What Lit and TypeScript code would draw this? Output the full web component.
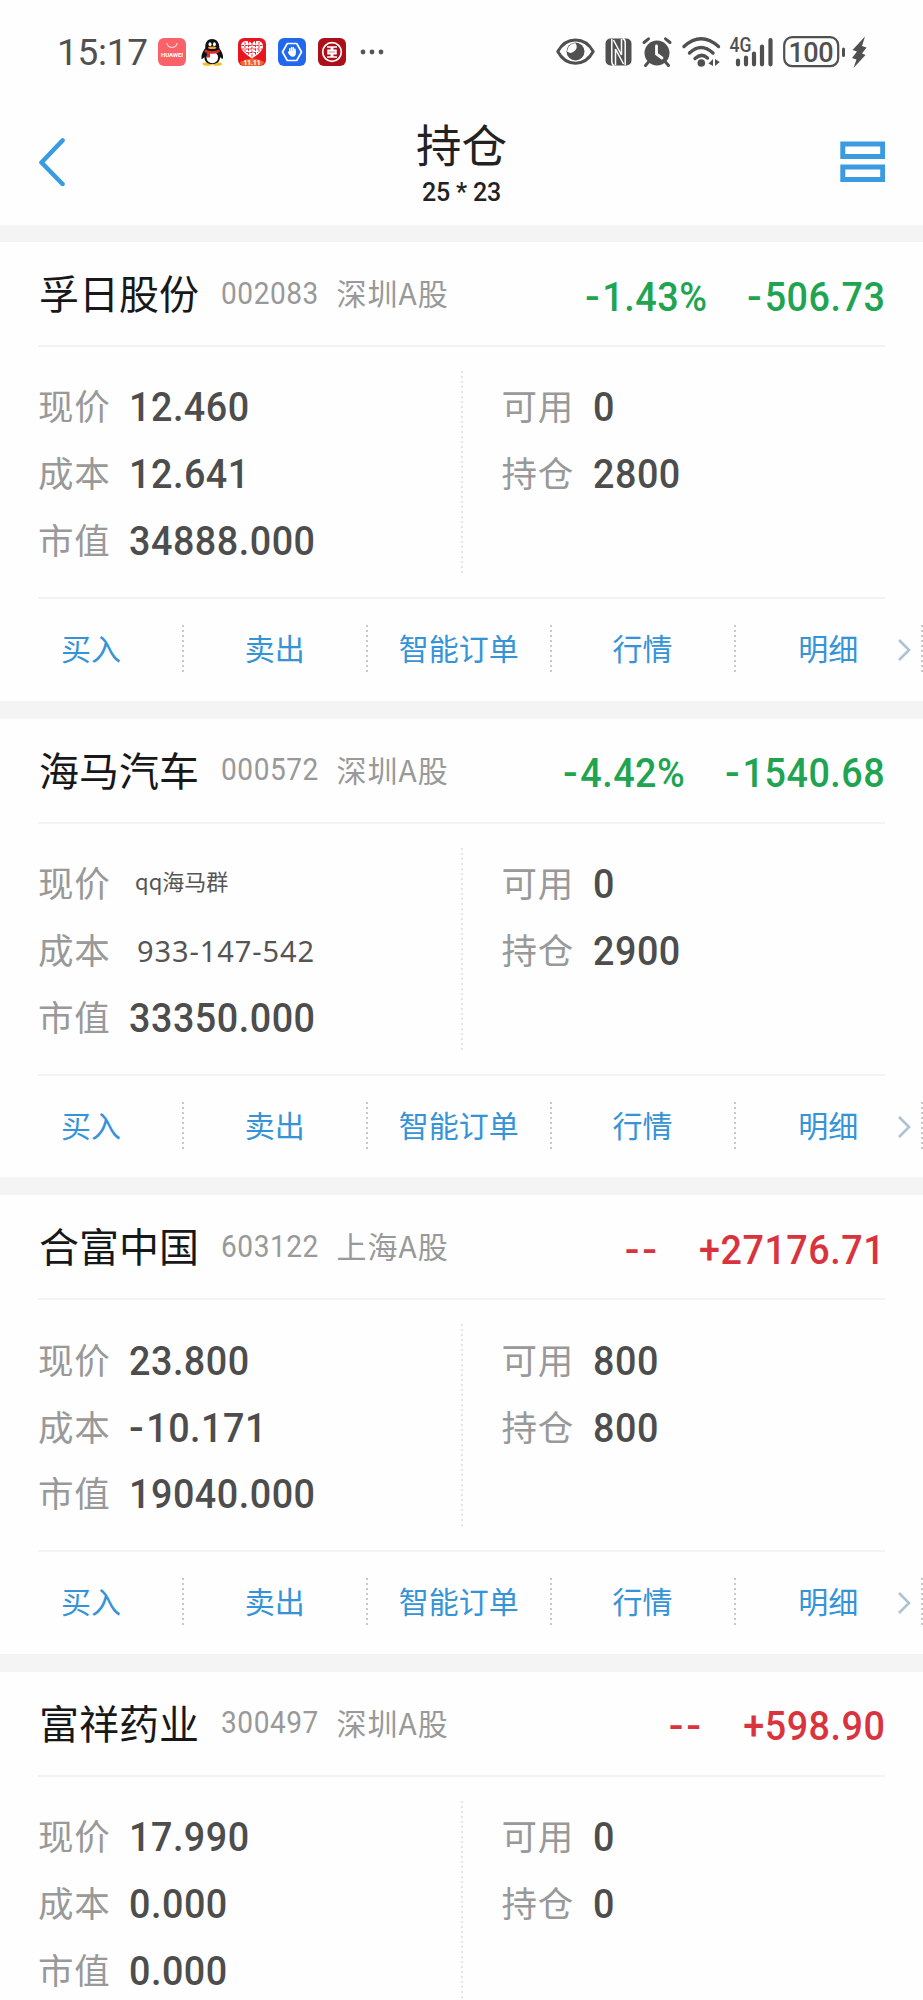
import { LitElement, html, css, svg, nothing } from "lit";
import { customElement, property } from "lit/decorators.js";
import { classMap } from "lit/directives/class-map.js";

interface Holding {
  name: string;
  code: string;
  market: string;
  percent: string;
  amount: string;
  up: boolean;
  price: string;
  cost: string;
  value: string;
  available: string;
  position: string;
  note?: boolean;
  collapsed?: boolean;
}

const HOLDINGS: Holding[] = [
  { name: "孚日股份", code: "002083", market: "深圳A股", percent: "-1.43%", amount: "-506.73", up: false, price: "12.460", cost: "12.641", value: "34888.000", available: "0", position: "2800" },
  { name: "海马汽车", code: "000572", market: "深圳A股", percent: "-4.42%", amount: "-1540.68", up: false, price: "qq海马群", cost: "933-147-542", value: "33350.000", available: "0", position: "2900", note: true },
  { name: "合富中国", code: "603122", market: "上海A股", percent: "--", amount: "+27176.71", up: true, price: "23.800", cost: "-10.171", value: "19040.000", available: "800", position: "800" },
  { name: "富祥药业", code: "300497", market: "深圳A股", percent: "--", amount: "+598.90", up: true, price: "17.990", cost: "0.000", value: "0.000", available: "0", position: "0", collapsed: true },
];

const ACTIONS = ["买入", "卖出", "智能订单", "行情", "明细"];

@customElement("status-bar")
class StatusBar extends LitElement {
  static styles = css`
    :host {
      display: flex;
      align-items: center;
      height: 103px;
      padding: 0 56.500px 0 57px;
      box-sizing: border-box;
      font-family: Roboto, sans-serif;
      color: #505050;
    }
    svg { display: block; flex: none; overflow: visible; }
    .time { width: 100.700px; font-size: 37px; line-height: 105px; letter-spacing: -.3px; height: 103px; }
    .apps { display: flex; align-items: center; gap: 12.2px; }
    .dots { margin-left: 14px; }
    .system { display: flex; align-items: center; margin-left: auto; }
    .nfc { margin-left: 10px; }
    .alarm { margin-left: 10px; }
    .wifi { margin-left: 10px; }
    .signal { margin-left: 9px; }
    .battery { margin-left: 10px; }
    .bolt { margin-left: 6px; }
    text { font-family: Roboto, sans-serif; }
  `;

  render() {
    return html`
      <div class="time">15:17</div>
      <div class="apps">
        <svg width="28" height="28" viewBox="0 0 28 28">
          <rect width="28" height="28" rx="6" fill="#fb6169" />
          <path d="M9 5a5 4.5 0 0 0 10 0" fill="none" stroke="#ffd0d0" stroke-width="1.2" />
          <text x="14" y="18.6" font-size="6" font-weight="700" fill="#fff" text-anchor="middle" textLength="22">HUAWEI</text>
        </svg>
        <svg width="28" height="28" viewBox="0 0 28 28">
          <ellipse cx="9.500" cy="26" rx="5" ry="1.800" fill="#f3bd2e" />
          <ellipse cx="19" cy="26" rx="5" ry="1.800" fill="#f3bd2e" />
          <path d="M14 1C9 1 7 5 7.300 10C5 13 3 17 3.500 20.500C4 22 5.500 20 6.300 19C7 25 10 26 14.300 26C19 26 21.500 24 22.300 19C23.500 20.500 24.500 22 25 20C25.500 17 23.500 13 21.300 10C21.500 5 19 1 14 1Z" fill="#111" />
          <ellipse cx="14.300" cy="19.500" rx="5.800" ry="5.800" fill="#fff" />
          <ellipse cx="12" cy="6.300" rx="1.500" ry="2" fill="#fff" />
          <ellipse cx="16.400" cy="6.300" rx="1.500" ry="2" fill="#fff" />
          <ellipse cx="14.200" cy="9.800" rx="4.200" ry="1.300" fill="#f2a52a" />
          <path d="M7 11.500Q14 15 21.500 11.500L21.800 14Q16 16.500 12 15.600V19.500H9V15L6.600 14Z" fill="#e3262c" />
        </svg>
        <svg width="28" height="28" viewBox="0 0 28 28">
          <rect width="28" height="28" rx="6" fill="#e8151f" />
          <path d="M2 24Q14 17 26 24Q25 28 21 28H7Q3 28 2 24Z" fill="#f0652a" />
          <path d="M14 20.500C8 16.500 3 13 3 7.800C3 2 11 1.500 14 5.500C17 1.500 25 2 25 7.800C25 13 20 16.500 14 20.500Z" fill="#fff" />
          <path d="M7 4v11M10.500 3v14M14 5v15M17.500 3v14M21 4v11M3.500 7.500h21M4 11h20M8 14.500h12" stroke="#e8151f" stroke-width=".9" stroke-dasharray="2.500 1.200" />
          <text x="14" y="26.500" font-size="6.500" font-weight="900" fill="#fff" text-anchor="middle">11.11</text>
        </svg>
        <svg width="28" height="28" viewBox="0 0 28 28">
          <rect width="28" height="28" rx="6" fill="#2268ee" />
          <path d="M9.300 5.500h9.400L23.500 14l-4.800 8.500H9.300L4.500 14Z" fill="none" stroke="#fff" stroke-width="1.700" stroke-linejoin="round" />
          <path d="M11.800 14V10.800M13.600 13V9.600M15.400 13V9.800M17 14V11.200" stroke="#fff" stroke-width="1.500" stroke-linecap="round" />
          <path d="M11 13H17.800V15.500Q17.600 18.800 14.600 18.800Q12.800 18.800 11.500 17L9.700 14.600Z" fill="#fff" />
        </svg>
        <svg width="28" height="28" viewBox="0 0 28 28">
          <rect width="28" height="28" rx="6" fill="#ab0f19" />
          <circle cx="14" cy="14" r="9.300" fill="none" stroke="#fff" stroke-width="1.700" />
          <path d="M9 9h4.300v3.200H10v3.600h3.300V19H9M19 9h-4.300v3.200H18v3.600h-3.300V19H19M10 14h8" fill="none" stroke="#fff" stroke-width="1.500" />
        </svg>
      </div>
      <svg class="dots" width="24" height="6" viewBox="0 0 24 6" fill="#555">
        <circle cx="3" cy="3" r="2.400" /><circle cx="12" cy="3" r="2.400" /><circle cx="21" cy="3" r="2.400" />
      </svg>
      <div class="system">
        <svg width="39" height="27" viewBox="0 0 39 27">
          <path d="M1.800 13.500C10-2 29-2 37.200 13.500C29 29 10 29 1.800 13.500Z" fill="none" stroke="#505050" stroke-width="3" stroke-linejoin="round" />
          <circle cx="19.500" cy="13.500" r="9" fill="#505050" />
          <path d="M19.300 5A6 6 0 0 1 11 13.500A9 9 0 0 1 19.300 5Z" fill="#fefefe" />
        </svg>
        <svg class="nfc" width="27" height="28" viewBox="0 0 27 28">
          <path d="M5.500 .5H21.500A5 5 0 0 1 26.500 5.500V22.500A5 5 0 0 1 21.500 27.500H5.500A5 5 0 0 1 .5 22.500V5.500A5 5 0 0 1 5.500 .5Z" fill="#505050" />
          <path d="M6.800 1V23.500Q6.800 26.500 9.300 27.500M20.200 27V4.500Q20.200 1.500 17.700 .5" fill="none" stroke="#fefefe" stroke-width="1.500" />
          <path d="M10.500 27V11L18.500 26M16.500 1V17L8.500 2" fill="none" stroke="#fefefe" stroke-width="1.500" />
        </svg>
        <svg class="alarm" width="30" height="30" viewBox="0 0 30 30">
          <circle cx="15" cy="16" r="12.500" fill="#505050" />
          <path d="M2 5.500L6.500 1.800M28 5.500L23.500 1.800M6.500 25L3.500 28.500M23.500 25L26.500 28.500" stroke="#505050" stroke-width="3" stroke-linecap="round" />
          <path d="M14.500 9V17L20 21" fill="none" stroke="#fefefe" stroke-width="2.800" stroke-linecap="round" />
        </svg>
        <svg class="wifi" width="39" height="30" viewBox="0 0 39 30">
          <path d="M2 9.500Q19-6 36.500 9.500M7.500 16Q19 5 31 16M13 21.500Q19.500 15.500 25.500 21" fill="none" stroke="#505050" stroke-width="3.400" stroke-linecap="round" />
          <circle cx="19.300" cy="26" r="3.800" fill="#505050" />
          <path d="M31 22v7L26.500 26.500ZM33 22v7L37.800 25Z" fill="#505050" />
        </svg>
        <svg class="signal" width="43" height="30" viewBox="0 0 43 30">
          <text x="-.5" y="14.500" font-size="19.500" font-weight="500" fill="#505050" textLength="22" lengthAdjust="spacingAndGlyphs">4G</text>
          <path d="M8 23.500V27.300M16 20.500V27.300M24 16.500V27.300M32 9.500V27.300M40.500 3V27.300" stroke="#505050" stroke-width="4.200" stroke-linecap="round" />
        </svg>
        <svg class="battery" width="63" height="32" viewBox="0 0 63 32">
          <rect x="1.200" y="1.200" width="54" height="29" rx="8" fill="none" stroke="#505050" stroke-width="2.200" />
          <text x="28" y="25.500" font-size="27" font-weight="500" fill="#505050" text-anchor="middle" textLength="45">100</text>
          <path d="M60.500 13V19.500" stroke="#505050" stroke-width="3" stroke-linecap="round" />
        </svg>
        <svg class="bolt" width="15" height="32" viewBox="0 0 15 32">
          <path d="M13 .5L.5 14L5 15.500L0 22L4.500 23.500L1.500 32L13.500 19L10 17.500L14.500 11.500L10 10Z" fill="#505050" />
        </svg>
      </div>
    `;
  }
}

@customElement("nav-bar")
class NavBar extends LitElement {
  static styles = css`
    :host {
      display: grid;
      grid-template-columns: 46px 1fr 46px;
      align-items: center;
      height: 122px;
      padding: 0 38px;
      box-sizing: border-box;
      font-family: Roboto, "Noto Sans CJK SC", sans-serif;
      color: #222;
    }
    svg { display: block; margin-top: -5px; }
    .titles { text-align: center; height: 122px; }
    .title { font-family: "Noto Sans CJK SC", sans-serif; font-size: 45.500px; line-height: 54px; padding-top: 13px; }
    .count { font-size: 25px; line-height: 30px; margin-top: 8px; font-weight: 500; letter-spacing: -.2px; }
  `;
  render() {
    return html`
      <svg width="28" height="48" viewBox="0 0 28 48">
        <path d="M24.500 2.500L3.500 24.500L24.500 46" fill="none" stroke="#3a9be0" stroke-width="4.600" stroke-linecap="round" stroke-linejoin="round" />
      </svg>
      <div class="titles">
        <div class="title">持仓</div>
        <div class="count">25 * 23</div>
      </div>
      <svg width="46" height="42" viewBox="0 0 46 42">
        <path d="M3.800 3H43.700V15.500H3.800ZM3.800 26H43.700V38.500H3.800Z" fill="none" stroke="#3a9be0" stroke-width="5" />
      </svg>
    `;
  }
}

@customElement("holding-card")
class HoldingCard extends LitElement {
  @property({ attribute: false }) item!: Holding;

  static styles = css`
    :host {
      display: block;
      height: 476.6px;
      box-sizing: border-box;
      border-bottom: 18px solid #f4f4f4;
      font-family: "Noto Sans CJK SC", sans-serif;
    }
    .head {
      display: flex;
      align-items: center;
      height: 105px;
      margin: 0 38px;
      border-bottom: 2px solid #f3f3f3;
      box-sizing: border-box;
      white-space: nowrap;
    }
    .num { font-family: Roboto, sans-serif; transform: scaleX(.92); transform-origin: 0 50%; }
    .name { font-size: 40px; line-height: 60px; color: #181818; margin: -3px 0 0 1px; width: 182px; }
    .code { font-size: 30.5px; letter-spacing: .6px; color: #999; width: 115.500px; line-height: 40px; }
    .market { font-size: 30px; letter-spacing: 1px; line-height: 40px; color: #999; margin-top: -3px; }
    .change {
      display: flex;
      gap: 43.500px;
      margin-left: auto;
      font-size: 41px;
      font-weight: 500;
      letter-spacing: .550px;
      line-height: 50px;
      padding: 6px 0 0;
      color: #20a452;
      transform-origin: 100% 50%;
    }
    .change.up { color: #d9343d; }
    .dash { display: inline-block; width: 18.700px; letter-spacing: 0; transform: scaleX(1.15); transform-origin: 0 50%; }
    .body {
      display: grid;
      grid-template-columns: 423px 1fr;
      height: 252px;
      margin: 0 38px;
      padding: 24px 0 25px;
      box-sizing: border-box;
      border-bottom: 2px solid #f3f3f3;
    }
    .col { display: flex; flex-direction: column; height: 202px; padding-top: 1px; box-sizing: border-box; }
    .col + .col {
      padding-left: 40.500px;
      background: repeating-linear-gradient(#e4e4e4 0 2px, transparent 2px 5px) left / 2px 100% no-repeat;
    }
    .row { display: flex; align-items: center; height: 66.9px; flex: none; }
    .label { font-size: 35.500px; letter-spacing: .8px; line-height: 50px; color: #999; width: 91px; white-space: nowrap; }
    .row .num { font-size: 41px; font-weight: 500; letter-spacing: .550px; line-height: 50px; color: #4d4d4d; padding-top: 4px; }
    .note { font-size: 22px; line-height: 30px; color: #555; padding: 0 0 5px 6px; }
    .group { font-family: "Noto Sans", sans-serif; font-size: 29px; letter-spacing: .9px; line-height: 40px; color: #555; padding: 4px 0 0 8px; }
    .actions { display: grid; grid-template-columns: repeat(4, 183.9px) 187.4px; height: 102px; align-items: center; color: #3593d8; font-size: 30px; }
    .action {
      display: flex;
      align-items: center;
      justify-content: center;
      height: 50px;
      position: relative;
      background: repeating-linear-gradient(#c8c8c8 0 2px, transparent 2px 5px) right / 2px 100% no-repeat;
    }
    .action span { margin: -6px 2px 0 0; }
    .chevron { position: absolute; right: 11px; top: 13px; }
  `;

  private figure(value: string) {
    return [...value].map((c) => (c === "-" ? html`<span class="dash">-</span>` : c));
  }

  private row(label: string, value: unknown, kind = "num") {
    return html`<div class="row"><span class="label">${label}</span><span class=${kind}>${value}</span></div>`;
  }

  private actions() {
    return html`<div class="actions">
      ${ACTIONS.map(
        (a, i) => html`<div class="action"><span>${a}</span>${i === ACTIONS.length - 1
          ? html`<svg class="chevron" width="16" height="24" viewBox="0 0 16 24">${svg`<path d="M3 2L13 12L3 22" fill="none" stroke="#aec2d6" stroke-width="2.600" />`}</svg>`
          : nothing}</div>`
      )}
    </div>`;
  }

  render() {
    const h = this.item;
    return html`
      <div class="head">
        <span class="name">${h.name}</span>
        <span class="num code">${h.code}</span>
        <span class="market">${h.market}</span>
        <div class=${classMap({ num: true, change: true, up: h.up })}>
          <span>${this.figure(h.percent)}</span><span>${this.figure(h.amount)}</span>
        </div>
      </div>
      <div class="body">
        <div class="col">
          ${this.row("现价", h.price, h.note ? "note" : "num")}
          ${h.note ? this.row("成本", h.cost, "group") : this.row("成本", this.figure(h.cost))}
          ${this.row("市值", h.value)}
        </div>
        <div class="col">
          ${this.row("可用", h.available)}
          ${this.row("持仓", h.position)}
        </div>
      </div>
      ${h.collapsed ? nothing : this.actions()}
    `;
  }
}

@customElement("app-root")
class AppRoot extends LitElement {
  static styles = css`
    :host { display: block; height: 2000px; overflow: hidden; background: #fefefe; }
    .gap { height: 17px; background: #f4f4f4; }
  `;
  render() {
    return html`
      <status-bar></status-bar>
      <nav-bar></nav-bar>
      <div class="gap"></div>
      ${HOLDINGS.map((h) => html`<holding-card .item=${h}></holding-card>`)}
    `;
  }
}
